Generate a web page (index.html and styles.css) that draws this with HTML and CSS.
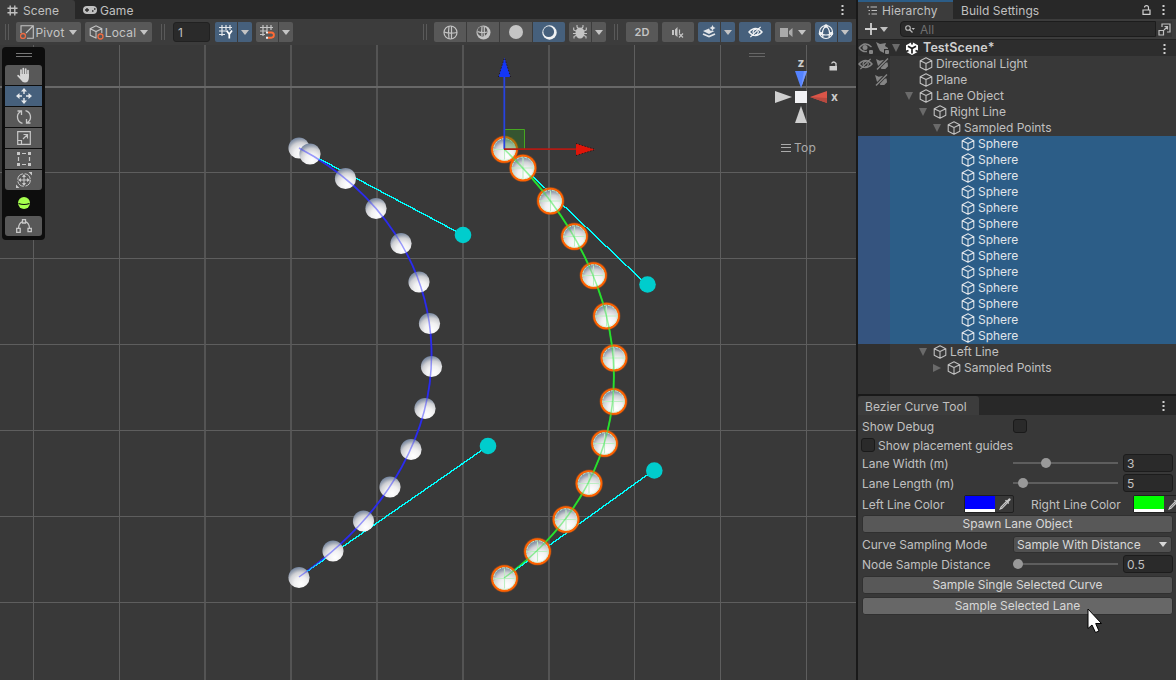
FILE: index.html
```html
<!DOCTYPE html>
<html lang="en">
<head>
<meta charset="utf-8">
<title>TestScene</title>
<link rel="stylesheet" href="styles.css">
</head>
<body>
<svg class="defs" width="0" height="0">
  <defs>
    <radialGradient id="ball" cx=".6" cy=".8" r=".82">
      <stop offset="0" stop-color="#fff"/><stop offset=".4" stop-color="#f0f0f1"/><stop offset=".68" stop-color="#cfd0d4"/><stop offset=".84" stop-color="#9aa3b2"/><stop offset="1" stop-color="#6f819c"/>
    </radialGradient>
    <symbol id="cube" viewBox="0 0 14 14"><path d="M7 .8 12.8 3.7V10.3L7 13.3 1.2 10.3V3.7ZM1.2 3.7 7 6.6 12.8 3.7M7 6.6V13.3" fill="none" stroke="currentColor" stroke-width="1.1" stroke-linejoin="round"/></symbol>
    <symbol id="caret" viewBox="0 0 8 5"><path d="M0 0H8L4 5Z" fill="currentColor"/></symbol>
    <symbol id="dots" viewBox="0 0 3 11"><path d="M.5 1h2v2h-2zM.5 5h2v2h-2zM.5 9h2v2h-2z" fill="currentColor"/></symbol>
    <symbol id="hash" viewBox="0 0 12 12"><path d="M3.5 .5V11.5M8.5 .5V11.5M.5 3.5H11.5M.5 8.5H11.5" stroke="currentColor" stroke-width="1.5" fill="none"/></symbol>
    <symbol id="eyeoff" viewBox="0 0 16 12"><path d="M1 6Q8-1.5 15 6Q8 13.500 1 6ZM13.500.5 2.500 11.500" fill="none" stroke="currentColor" stroke-width="1.4"/><path d="M6 8A3 3 0 0 1 9 3.200M10.500 4.500A3 3 0 0 1 7.500 9" fill="none" stroke="currentColor" stroke-width="1.4"/></symbol>
    <symbol id="pickoff" viewBox="0 0 14 13"><path d="M0 1 4 3 9 2 8 5 12.500 5 13 9 10 12H6L2 8Z" fill="currentColor"/><path d="M13 0 1 12.500" stroke="#303030" stroke-width="3.500"/><path d="M13 .5 1 12.500" stroke="currentColor" stroke-width="1.500"/></symbol>
    <symbol id="dropper" viewBox="0 0 12 12"><path d="M7.500 3.500 2 9 1.200 11 3 10.300 8.500 4.700" fill="none" stroke="currentColor" stroke-width="1.200"/><path d="M6 2.500 7 1.800 8 2.500 9.500.7Q11-.2 11.500 1T10.900 2.800L9.500 4 10.200 5 9.300 6Z" fill="currentColor"/></symbol>
  </defs>
</svg>

<div class="editor">
  <main class="scene">
    <div class="tabs">
      <div class="tab tab-scene"><svg width="11" height="11"><use href="#hash"/></svg>Scene</div>
      <div class="tab tab-game"><svg width="14" height="8" viewBox="0 0 14 8"><rect x="0" y="0" width="14" height="8" rx="4" fill="currentColor"/><path d="M2 4H6M4 2V6M9 5h1.500M11 3h1.500" stroke="#282828" stroke-width="1.300"/></svg>Game</div>
      <svg class="menu" width="3" height="11"><use href="#dots"/></svg>
    </div>
    <div class="toolbar">
      <i class="grip"></i>
      <div class="btn w65"><svg width="14" height="14" viewBox="0 0 14 14"><path d="M1 8V.7H13.300V13.300H7M6 8 13 1" fill="none" stroke="currentColor" stroke-width="1.100"/><circle cx="3" cy="11" r="2.500" fill="none" stroke="#ef6b42" stroke-width="1.300"/></svg><span>Pivot</span><svg width="8" height="5"><use href="#caret"/></svg></div>
      <div class="btn w67"><svg width="15" height="15" viewBox="0 0 15 15"><path d="M7.500 13.300 1.200 10.300V3.700L7 .8 12.800 3.700V8M1.200 3.700 7 6.600 12.800 3.700M7 6.600V13" fill="none" stroke="currentColor" stroke-width="1.100"/><circle cx="11.500" cy="11.500" r="2.500" fill="#585858" stroke="#ef6b42" stroke-width="1.300"/></svg><span>Local</span><svg width="8" height="5"><use href="#caret"/></svg></div>
      <i class="grip g2"></i>
      <div class="snap">1</div>
      <div class="btn w22 on left"><svg width="14" height="14" viewBox="0 0 14 14"><path d="M3 0V11M7 0V5M11 0V5M0 2.500H13M0 6H7M0 9.500H6" stroke="#e4e8ec" stroke-width="1.200"/><path d="M7.500 5.500 10.300 9.300 13 5.500M10.300 9V13.500" fill="none" stroke="#fff" stroke-width="1.700"/></svg></div>
      <div class="btn w14 on right"><svg width="8" height="5"><use href="#caret"/></svg></div>
      <div class="btn w22 left gap4"><svg width="15" height="14" viewBox="0 0 15 14"><path d="M3 0V11M7 0V6M11 0V5M0 2.500H13M0 6H7M0 9.500H5" stroke="currentColor" stroke-width="1.200"/><path d="M8 7.500H11.300A2.600 2.600 0 0 1 11.300 12.700H8" fill="none" stroke="#ff6b35" stroke-width="1.900"/><path d="M6 6.500H8V8.500H6ZM6 11.700H8V13.700H6Z" fill="#eee"/></svg></div>
      <div class="btn w14 right"><svg width="8" height="5"><use href="#caret"/></svg></div>

      <i class="grip g3"></i>
      <div class="btn w32 left"><svg width="15" height="15" viewBox="0 0 15 15" fill="none" stroke="currentColor" stroke-width="1.200"><circle cx="7.500" cy="7.500" r="6.500"/><path d="M6 1Q5 7 6 14M8.500 1V14M1 7Q7 9 14 7.500"/></svg></div>
      <div class="btn w32 mid"><svg width="15" height="15" viewBox="0 0 15 15"><circle cx="7.500" cy="7.500" r="7" fill="currentColor"/><circle cx="6.400" cy="6.400" r="5" fill="#585858"/><path d="M6 1.500Q5.500 6 6 11M8.300 1.500V11M1.500 6.500Q6 8.500 11 7" fill="none" stroke="currentColor" stroke-width="1.200"/></svg></div>
      <div class="btn w32 mid"><svg width="14" height="14" viewBox="0 0 14 14"><circle cx="7" cy="7" r="7" fill="currentColor"/></svg></div>
      <div class="btn w32 on right"><svg width="15" height="15" viewBox="0 0 15 15"><circle cx="7.500" cy="7.500" r="7.200" fill="#f0f2f4"/><circle cx="6.700" cy="6.700" r="5.400" fill="#46607c"/></svg></div>
      <div class="btn w22 left gap4"><svg width="14" height="14" viewBox="0 0 14 14"><ellipse cx="7" cy="8" rx="4.500" ry="5.500" fill="currentColor"/><path d="M4 0V2L5.500 3.500M10 0V2L8.500 3.500M.7 2.500V5L4 6.500M13.300 2.500V5L10 6.500M0 8.500H14M1 13.500V11.500L4 10M13 13.500V11.500L10 10" fill="none" stroke="currentColor" stroke-width="1.100"/></svg></div>
      <div class="btn w14 right"><svg width="8" height="5"><use href="#caret"/></svg></div>
      <i class="grip g4"></i>
      <div class="btn w32 two">2D</div>
      <div class="btn w32 gap4"><svg width="12" height="11" viewBox="0 0 12 11"><path d="M0 3H2V8H0ZM3 2.500 5.500 0V10L3 8Z" fill="currentColor"/><path d="M7.500 2.500V6M7 6.500 11 10.500M11 6.500 7 10.500" stroke="currentColor" stroke-width="1.200"/></svg></div>
      <div class="btn w22 on left gap4"><svg width="14" height="14" viewBox="0 0 14 14" fill="#e2e5e9"><path d="M1 6 7 3.500 8 5.500 12.500 6 7 9Z"/><path d="M1 9 7 11.500 13 9" fill="none" stroke="#e2e5e9" stroke-width="1.800"/><path d="M10.500 0 11.500 2 13.500 3 11.500 4 10.500 6 9.500 4 7.500 3 9.500 2Z"/></svg></div>
      <div class="btn w14 on right"><svg width="8" height="5"><use href="#caret"/></svg></div>
      <div class="btn w32 on gap4 white"><svg width="15" height="12"><use href="#eyeoff"/></svg></div>
      <div class="btn w36 gap4 cam"><svg width="13" height="9" viewBox="0 0 13 9"><path d="M0 0H8V9H0ZM9 3 12.500 0V9L9 6Z" fill="#aaa"/></svg><svg width="8" height="5"><use href="#caret"/></svg></div>
      <div class="btn w22 on left gap4 white"><svg width="16" height="16" viewBox="0 0 16 16" fill="none" stroke="currentColor" stroke-width="1.200"><circle cx="8" cy="8" r="6.500"/><path d="M8 2Q3 6 5 13.500M8 2Q13 6 11 13.500M2 9.500Q8 12.500 14 9.500"/><circle cx="8" cy="2" r="1.200" fill="currentColor"/><circle cx="2.500" cy="9.500" r="1.200" fill="currentColor"/><circle cx="13.500" cy="9.500" r="1.200" fill="currentColor"/></svg></div>
      <div class="btn w14 on right"><svg width="8" height="5"><use href="#caret"/></svg></div>
    </div>

    <div class="viewport">
      <svg class="canvas" width="856" height="635" viewBox="0 45 856 635">
        <g stroke="#686868">
          <path d="M33.500 45V680M119.500 45V680M634.500 45V680M720.500 45V680M806.500 45V680M0 172.500H856M0 258.500H856M0 344.500H856M0 430.500H856M0 516.500H856M0 602.500H856" stroke="#5e5e5e"/>
          <path d="M205 45V680M291 45V680M377 45V680M463 45V680M549 45V680" stroke="#5a5a5a" stroke-width="1.700"/>
          <path d="M0 87H856" stroke-width="2"/>
        </g>
        <path d="M299 148C463 235 488 446 299 577" class="curve blue"/>
        <path d="M504 149C647 285 654 470 504 578" class="curve green"/>
        <path d="M299 148 463 235M299 577 488 446M504 149 647 285M504 578 654 470" fill="none" stroke="#0ff" stroke-width="1.400" shape-rendering="crispEdges"/>
        <g fill="#00cdcd"><circle cx="463" cy="235" r="8.300"/><circle cx="488" cy="446" r="8.300"/><circle cx="647.500" cy="284.500" r="8.300"/><circle cx="654.300" cy="470.500" r="8.300"/></g>
        <g id="left-spheres"></g>
        <g id="right-spheres"></g>
        <path d="M299 148C463 235 488 446 299 577" class="ghost" stroke="#3a3aff"/>
        <path d="M504 149C647 285 654 470 504 578" class="ghost" stroke="#30e840"/>
        <path d="M504.500 129.500H524.500V149" fill="none" stroke="#4cae22"/><path d="M504.500 129.500V149H524.500V129.500Z" fill="#2f8a20" fill-opacity=".35"/>
        <path d="M504.300 149V76" stroke="#2743e0" stroke-width="1.800"/><path d="M504.500 57.500 510.500 77H498.500Z" fill="#1436f5"/>
        <path d="M504 149.200H577" stroke="#b21b14" stroke-width="1.800"/><path d="M595 149.400 576 143.500V155.500Z" fill="#e01509"/>
        <path d="M576 143.500 594 149M576 155.500 594 150M498.500 77 504 59M510.500 77 505 59" stroke="#201010" stroke-width="1" stroke-dasharray="1 2"/>
        <path d="M749 53.500H765M749 56.500H765" stroke="#666"/>
        <path d="M795 71H807L801 88Z" fill="#5583ff"/><path d="M807 71H804L801 88Z" fill="#7699ff"/>
        <path d="M795 123H807L801 106Z" fill="#cfcfcf"/><path d="M775 91V103L792 97Z" fill="#cfcfcf"/><path d="M827 91V103L810 97Z" fill="#dc5548"/><path d="M827 103V98L810 97Z" fill="#b84a40"/>
        <rect x="795" y="91" width="12" height="12" fill="#f2f2f4"/>
        <text x="797.500" y="66.500" class="axis">z</text><text x="831" y="100.500" class="axis">x</text>
        <path d="M829.500 66H837V70.500H829.500Z" fill="#d0d0d0"/><path d="M836 66V63.500Q833.500 60.500 831.500 63.500" fill="none" stroke="#d0d0d0" stroke-width="1.300"/>
        <path d="M781 144.500H791M781 147.500H791M781 151.500H791" stroke="#aaa"/>
        <text x="794" y="152" class="view">Top</text>
      </svg>

      <div class="palette">
        <i class="bars"></i>
        <div class="tool first"><svg width="16" height="16" viewBox="0 0 16 16"><path d="M5 8V3M7.300 8V1.500M9.700 8V2M12 9V3.500" stroke="#d6d6d6" stroke-width="1.700" stroke-linecap="round"/><path d="M4.200 7H12.900V11Q12.500 15.500 9 15.500 6.500 15.500 5 13L1.200 9Q1.500 7 3 8.200L4.200 9.500Z" fill="#d6d6d6"/></svg></div>
        <div class="tool on"><svg width="16" height="16" viewBox="0 0 16 16"><path d="M8 1.500V6M8 10V14.500M1.500 8H6M10 8H14.500" stroke="#e6e9ec" stroke-width="1.400"/><path d="M8 0 11 3.500H5ZM8 16 11 12.500H5ZM0 8 3.500 5V11ZM16 8 12.500 5V11Z" fill="#e6e9ec"/></svg></div>
        <div class="tool"><svg width="16" height="16" viewBox="0 0 16 16"><path d="M6.500 14.300A6.500 6.500 0 0 1 4.500 2.500M1.500 2H5.500V6M9.500 1.700A6.500 6.500 0 0 1 11.500 13.500M14.500 14H10.500V10" fill="none" stroke="currentColor" stroke-width="1.300"/></svg></div>
        <div class="tool"><svg width="14" height="14" viewBox="0 0 14 14"><path d="M.7.7H13.300V13.300H.7ZM.7 9.500H4.500V13M6 8 10.500 3.500M6.500 3.500H10.500V7.500" fill="none" stroke="currentColor" stroke-width="1.200"/></svg></div>
        <div class="tool"><svg width="14" height="14" viewBox="0 0 14 14"><path d="M5 1.500H9M5 12.500H9M1.500 5V9M12.500 5V9" stroke="currentColor" stroke-width="1.200"/><path d="M0 0H3V3H0ZM11 0H14V3H11ZM0 11H3V14H0ZM11 11H14V14H11Z" fill="currentColor"/></svg></div>
        <div class="tool last"><svg width="16" height="16" viewBox="0 0 16 16"><circle cx="8" cy="8" r="6.300" fill="none" stroke="currentColor" stroke-dasharray="8 1.900"/><path d="M8 3V13M3 8H13" stroke="currentColor"/><path d="M8 2 10 5H6ZM8 14 10 11H6ZM2 8 5 6V10ZM14 8 11 6V10ZM16 0V3.500L12.500 0ZM0 16V12.500L3.500 16Z" fill="currentColor"/></svg></div>
        <div class="ball"><svg width="12" height="12" viewBox="0 0 12 12"><circle cx="6" cy="6" r="6" fill="#a5ff4e"/><path d="M.5 6.500Q6 8.500 11.500 6.500" fill="none" stroke="#0d0d0d" stroke-width="1.200"/></svg></div>
        <div class="tool only"><svg width="16" height="14" viewBox="0 0 16 14"><path d="M2.500 9Q3 4 6.500 2.500M9.500 2.500Q13 4 13.500 9M6.500.7H9.500V4H6.500ZM.7 9.300H4.200V13.300H.7ZM12 9.300H15.300V12.700H12Z" fill="none" stroke="currentColor" stroke-width="1.300"/></svg></div>
      </div>
    </div>
  </main>

  <aside class="side">
    <section class="hierarchy">
      <div class="tabs">
        <div class="tab tab-h"><svg width="11" height="9" viewBox="0 0 11 9"><path d="M0 1H2M3.500 1H10M1.500 4.500H3M4.500 4.500H10M1.500 8H3M4.500 8H10" stroke="currentColor" stroke-width="1.100"/></svg>Hierarchy</div>
        <div class="tab tab-b">Build Settings</div>
        <svg class="lock" width="9" height="10" viewBox="0 0 9 10"><path d="M1 5H8V9.300H1ZM2.500 2.500Q2.500.7 4.500.7T6.500 2.500V5" fill="none" stroke="currentColor" stroke-width="1.200"/></svg>
        <svg class="menu" width="3" height="11"><use href="#dots"/></svg>
      </div>
      <div class="searchbar">
        <svg width="12" height="12" viewBox="0 0 12 12"><path d="M6 0V12M0 6H12" stroke="#d0d0d0" stroke-width="1.800"/></svg>
        <svg class="addcaret" width="8" height="5"><use href="#caret"/></svg>
        <div class="search"><svg width="10" height="8" viewBox="0 0 10 8"><circle cx="3" cy="3" r="2.300" fill="none" stroke="currentColor" stroke-width="1.100"/><path d="M4.500 4.500 7.500 7.500" stroke="currentColor" stroke-width="1.300"/><path d="M6.500 3H10L8.250 5Z" fill="currentColor"/></svg><span>All</span></div>
        <div class="expand"><svg width="13" height="13" viewBox="0 0 13 13"><path d="M4 4V1H12V9H9M1 7.500H5.500V12H1ZM6 7 9.500 3.500M6.500 3.500H9.500V6.500" fill="none" stroke="currentColor" stroke-width="1.200"/></svg></div>
      </div>
      <div class="tree" id="tree">
        <div class="row root"><span class="vis"><svg width="15" height="12" viewBox="0 0 15 12"><path d="M1 6Q7-1.500 13.500 5M1 6Q5 10.500 9 9.500" fill="none" stroke="currentColor" stroke-width="1.300"/><circle cx="7" cy="5.500" r="2.500" fill="currentColor"/><rect x="11" y="8" width="4" height="4" rx="1" fill="currentColor"/></svg><svg width="13" height="12" viewBox="0 0 13 12"><path d="M0 0 4 2 10 1 9 4 12 6V7H8V11L4 9 2 5Z" fill="currentColor"/><rect x="9" y="8" width="4" height="4" rx="1" fill="currentColor"/></svg></span><svg class="arrow" width="8" height="8" viewBox="0 0 8 8"><path d="M0 0H8L4 8Z" fill="currentColor"/></svg><svg class="unity" width="12" height="13" viewBox="0 0 12 13"><path d="M6 0 12 3.200V9.800L6 13 0 9.800V3.200Z" fill="#fff"/><path d="M6 6.500 2 4.200M6 6.500 10 4.200M6 6.500V11.500M6 0V2.500M0 9.500 2.500 8.500M12 9.500 9.500 8.500" stroke="#222" stroke-width="1.700"/></svg><b>TestScene*</b><svg class="menu" width="3" height="11"><use href="#dots"/></svg></div>
      </div>
    </section>

    <section class="bezier">
      <div class="tabs"><div class="tab tab-z">Bezier Curve Tool</div><svg class="menu" width="3" height="11"><use href="#dots"/></svg></div>
      <div class="form">
        <div class="field h20"><label>Show Debug</label><i class="check"></i></div>
        <div class="field guides"><i class="check"></i><span>Show placement guides</span></div>
        <div class="field h20"><label>Lane Width (m)</label><div class="slider"><i style="left:28px"></i></div><div class="num">3</div></div>
        <div class="field h20"><label>Lane Length (m)</label><div class="slider"><i style="left:5px"></i></div><div class="num">5</div></div>
        <div class="field colors"><span class="cl">Left Line Color</span><div class="swatch"><i class="c-blue"></i><svg width="12" height="12"><use href="#dropper"/></svg></div><span class="cr">Right Line Color</span><div class="swatch"><i class="c-green"></i><svg width="12" height="12"><use href="#dropper"/></svg></div></div>
        <div class="action">Spawn Lane Object</div>
        <div class="field h20 mode"><label>Curve Sampling Mode</label><div class="select">Sample With Distance<svg width="8" height="5"><use href="#caret"/></svg></div></div>
        <div class="field h20"><label>Node Sample Distance</label><div class="slider"><i style="left:0px"></i></div><div class="num">0.5</div></div>
        <div class="action second">Sample Single Selected Curve</div>
        <div class="action third hover">Sample Selected Lane</div>
      </div>
    </section>
  </aside>
  <svg class="cursor" width="16" height="26" viewBox="0 0 16 26"><path d="M1 1V20.500L5 17 8.500 24.500 12 23 8.700 15.500H14.500Z" fill="#fff" stroke="#000" stroke-width="1"/></svg>
</div>
<script src="scene.js"></script>
</body>
</html>
```
FILE: styles.css
```css
* { box-sizing: border-box; }
body { margin: 0; background: #383838; font-family: Inter, "Liberation Sans", sans-serif; font-size: 12px; letter-spacing: -.03px; color: #c0c0c0; overflow: hidden; }
svg { display: block; flex: none; }
i { display: block; flex: none; }
.defs { position: absolute; }
.editor { display: flex; width: 1176px; height: 680px; position: relative; }
.scene { width: 856px; flex: none; display: flex; flex-direction: column; }
.side { width: 320px; border-left: 2px solid #191919; display: flex; flex-direction: column; }

.tabs { display: flex; height: 19px; background: #282828; align-items: center; white-space: nowrap; letter-spacing: .06px; }
.tab { height: 19px; display: flex; align-items: center; padding-top: 1px; }
.tabs .menu { margin-left: auto; margin-right: 12px; color: #d0d0d0; }
.side .menu { margin-right: 11px; }
.scene .tabs .menu { margin-right: 12px; }
.tab-scene { width: 75px; padding-left: 7px; gap: 5px; background: #3c3c3c; border-radius: 0 3px 0 0; }
.tab-game { padding-left: 8px; gap: 3px; }
.tab-h { width: 95px; padding-left: 9px; gap: 4px; background: #3c3c3c; border-top: 2px solid #2c5d87; padding-top: 0; padding-bottom: 1px; }
.tab-b { padding-left: 8px; }
.tabs .lock { margin-left: auto; color: #d0d0d0; }
.tabs .lock + .menu { margin-left: 11px; }

.toolbar { height: 26px; background: #3c3c3c; display: flex; align-items: center; padding-left: 5px; flex: none; }
.btn { height: 20px; background: #585858; border-radius: 2px; display: flex; align-items: center; justify-content: center; flex: none; color: #c4c4c4; letter-spacing: .2px; }
.on { background: #46607c; }
.white { color: #f0f2f4; }
.left { border-radius: 2px 0 0 2px; margin-right: 1px; }
.mid { border-radius: 0; margin-right: 1px; }
.right { border-radius: 0 2px 2px 0; }
.gap4 { margin-left: 4px; }
.w14 { width: 14px; } .w22 { width: 22px; } .w32 { width: 32px; } .w36 { width: 36px; }
.w65 { width: 65px; } .w67 { width: 67px; margin-left: 4px; }
.w65 span, .w67 span { margin: 0 4px 0 1px; }
.cam { gap: 5px; }
.two { font-size: 11px; font-weight: 600; }
.grip { width: 4px; height: 16px; border: solid #5a5a5a; border-width: 0 1px; margin-right: 7px; }
.g2 { margin-left: 9px; margin-right: 8px; }
.g3 { margin-left: 130px; }
.g4 { margin-left: 8px; margin-right: 8px; }
.snap { width: 37px; height: 20px; margin-right: 5px; background: #2a2a2a; border: 1px solid #212121; border-radius: 3px; padding: 2px 4px; line-height: 15px; }

.viewport { position: relative; height: 635px; background: #393939; }
.curve { fill: none; stroke-width: 1.9; }
.blue { stroke: #2222d4; }
.green { stroke: #22d422; }
.ghost { fill: none; stroke-width: 1.5; opacity: .5; }
.axis { font-weight: 700; font-size: 12px; fill: #ccc; }
.view { font-size: 12px; fill: #aaa; letter-spacing: .2px; }
.palette { position: absolute; left: 2px; top: 2px; width: 43px; height: 193px; background: #0d0d0d; border-radius: 4px; padding: 6px 3px 0; }
.bars { height: 4px; width: 16px; margin: 0 0 8px 11px; border: solid #777; border-width: 1px 0; }
.tool { height: 20px; width: 37px; margin-bottom: 1px; background: #585858; display: flex; align-items: center; justify-content: center; color: #c8c8c8; }
.tool.on { background: #46607c; }
.first { border-radius: 3px 3px 0 0; }
.last { border-radius: 0 0 3px 3px; margin: 0; }
.only { border-radius: 3px; margin: 0; }
.ball { height: 26px; display: flex; align-items: center; justify-content: center; }

.hierarchy { height: 396px; border-bottom: 2px solid #191919; }
.searchbar { height: 21px; background: #3c3c3c; display: flex; align-items: center; padding-left: 7px; border-bottom: 1px solid #232323; }
.addcaret { margin: 0 15px 0 3px; }
.search { width: 256px; height: 16px; background: #2a2a2a; border: 1px solid #1c1c1c; border-radius: 4px 0 0 4px; display: flex; align-items: center; gap: 5px; padding-left: 4px; flex: none; color: #bbb; margin-left: -3px; }
.search span { color: #6f6f6f; }
.expand { width: 16px; height: 16px; background: #353535; display: flex; align-items: center; justify-content: center; }
.tree { height: 354px; background: linear-gradient(90deg, #303030 32px, #383838 32px); }
.row { height: 16px; display: flex; align-items: center; white-space: nowrap; }
.row > span:last-child, .row b { padding-bottom: 2px; }
.row .vis { width: 32px; height: 16px; display: flex; align-items: center; gap: 3px; color: #858585; flex: none; }
.row .cube { margin-right: 3px; }
.row .arrow { color: #6a6a6a; margin-right: 6px; }
.row .slot { width: 14px; flex: none; }
.root { background: #2d2d2d; }
.root .arrow { margin: 0 6px 0 2px; }
.root b { margin-left: 5px; font-weight: 600; color: #d0d0d0; font-size: 12.5px; letter-spacing: .1px; }
.root .menu { margin-left: auto; margin-right: 10px; color: #d0d0d0; }
.selected { background: linear-gradient(90deg, #35547f 32px, #2c5d87 32px); color: #e0e5ea; }

.bezier { flex: 1; background: #383838; }
.tab-z { width: 121px; padding-left: 7px; background: #3c3c3c; border-radius: 3px 3px 0 0; }
.form { padding: 1px 4px 0 4px; }
.field { display: flex; align-items: center; white-space: nowrap; }
.h20 { height: 20px; }
.field label { width: 151px; flex: none; }
.check { width: 14px; height: 14px; background: #2a2a2a; border: 1px solid #1a1a1a; border-radius: 3px; }
.guides { height: 17px; margin-left: -1px; }
.guides span { padding: 2px 0 0 3px; }
.slider { width: 105px; height: 10px; margin-right: 5px; flex: none; position: relative; background: linear-gradient(#5e5e5e, #5e5e5e) 0 4px / 105px 2px no-repeat; }
.slider i { position: absolute; top: 0; width: 10px; height: 10px; border-radius: 5px; background: #999; }
.num { width: 50px; height: 18px; background: #2a2a2a; border: 1px solid #1c1c1c; border-radius: 3px; padding-left: 3px; line-height: 17px; flex: none; }
.colors { height: 22px; overflow: hidden; margin-right: -4px; }
.cl, .cr { padding-top: 1px; }
.cl { width: 102px; flex: none; }
.cr { width: 102px; margin-left: 17px; flex: none; }
.swatch { width: 50px; height: 18px; border: 1px solid #202020; border-radius: 2px; display: flex; align-items: center; flex: none; color: #ccc; }
.swatch i { width: 30px; height: 16px; border-bottom: 3px solid #fff; margin-right: 4px; }
.c-blue { background: #00f; }
.c-green { background: #0f0; }
.action { height: 18px; background: #585858; border: 1px solid #303030; border-radius: 3px; width: 311px; text-align: center; line-height: 16px; color: #d8d8d8; }
.mode { margin-top: 1px; }
.select { width: 159px; height: 17px; background: #515151; border: 1px solid #303030; border-radius: 3px; display: flex; align-items: center; justify-content: space-between; padding: 0 4px 0 3px; color: #d8d8d8; }
.second { margin-top: 2px; }
.third { margin-top: 3px; }
.hover { background: #676767; }
.cursor { position: absolute; left: 1087px; top: 608px; }
```
FILE: scene.js
```js
const NS = "http://www.w3.org/2000/svg";

function add(parent, tag, attrs) {
  const el = document.createElementNS(NS, tag);
  for (const k in attrs) el.setAttribute(k, attrs[k]);
  parent.appendChild(el);
}

const left = [[299,148],[310,154],[345.5,178.5],[376,208.5],[401,243.5],[419,282],[429.5,323.5],[431.5,366.5],[425,408.5],[411,449.5],[390,487],[363.5,521],[333,551],[299,577.5]];
const right = [[504.5,149.5],[523,168],[550.5,201],[574.5,236.5],[593.5,275.5],[606.5,316],[614,358],[613.5,401.5],[604.5,443.5],[589,483.5],[566,519.5],[537.5,551.5],[504.5,578.5]];

const leftGroup = document.getElementById("left-spheres");
for (const [cx, cy] of left) add(leftGroup, "circle", { cx, cy, r: 10.6, fill: "url(#ball)" });

const rightGroup = document.getElementById("right-spheres");
for (const [cx, cy] of right) {
  add(rightGroup, "circle", { cx, cy, r: 14, fill: "#ff6200", "fill-opacity": 0.35 });
  add(rightGroup, "circle", { cx, cy, r: 13.3, fill: "#ff6200" });
  add(rightGroup, "circle", { cx, cy, r: 11.3, fill: "url(#ball)" });
  add(rightGroup, "circle", { cx, cy, r: 10.8, fill: "none", stroke: "#c6f0c6", "stroke-width": 0.9, "stroke-dasharray": "3 1" });
  add(rightGroup, "path", { d: `M${cx - 10} ${cy}H${cx + 10}M${cx} ${cy - 10}V${cy + 10}`, stroke: "#bdeec4", "stroke-width": 1.1 });
}

// [indent, label, arrow, selected, hidden, unpickable]
const rows = [
  [45, "Directional Light", "", false, true, true],
  [45, "Plane", "", false, false, true],
  [45, "Lane Object", "down"],
  [59, "Right Line", "down"],
  [73, "Sampled Points", "down"],
  ...Array.from({ length: 13 }, () => [87, "Sphere", "", true]),
  [59, "Left Line", "down"],
  [73, "Sampled Points", "right"]
];
const tree = document.getElementById("tree");
for (const [indent, label, arrow, selected, hidden, unpickable] of rows) {
  const eye = hidden ? '<svg width="15" height="12"><use href="#eyeoff"/></svg>' : '<span class="slot"></span>';
  const pick = unpickable ? '<svg width="13" height="12"><use href="#pickoff"/></svg>' : "";
  const shape = arrow === "right" ? "M0 0V8L8 4Z" : "M0 0H8L4 8Z";
  const mark = arrow ? `<svg class="arrow" width="8" height="8"><path d="${shape}" fill="currentColor"/></svg>` : '<span class="slot"></span>';
  tree.insertAdjacentHTML("beforeend",
    `<div class="row${selected ? " selected" : ""}"><span class="vis">${eye}${pick}</span><span style="width:${indent - 30}px"></span>${mark}<svg class="cube" width="14" height="14"><use href="#cube"/></svg><span>${label}</span></div>`);
}
```
